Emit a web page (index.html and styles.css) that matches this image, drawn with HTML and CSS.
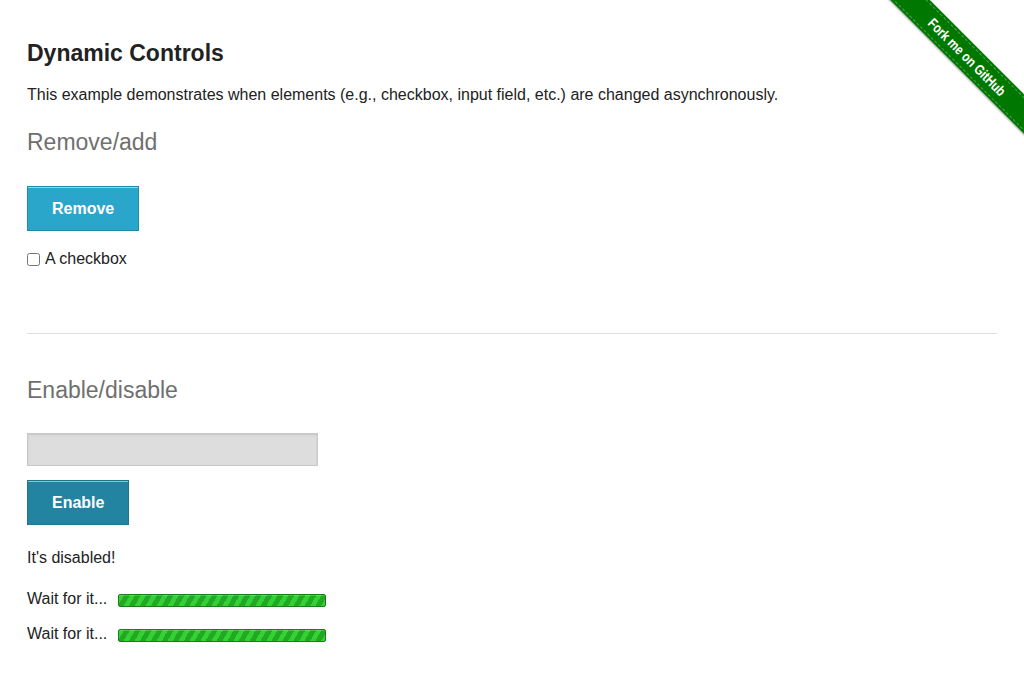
FILE: index.html
```html
<!DOCTYPE html>
<html>
<head>
<meta charset="utf-8">
<title>The Internet</title>
<link rel="stylesheet" href="styles.css">
</head>
<body>
<div class="ribbon-wrap"><a class="ribbon" href="#"><span class="ribbon-text">Fork me on GitHub</span></a></div>
<div class="page">
  <h3 class="title">Dynamic Controls</h3>
  <p class="intro">This example demonstrates when elements (e.g., checkbox, input field, etc.) are changed asynchronously.</p>
  <h4 class="subhead sub-first">Remove/add</h4>
  <button class="button btn-remove" type="button">Remove</button>
  <label class="check-row"><input type="checkbox" class="check"> A checkbox</label>
  <hr class="rule">
  <h4 class="subhead sub-second">Enable/disable</h4>
  <input class="text-input" type="text" disabled>
  <button class="button btn-enable" type="button">Enable</button>
  <p class="message">It's disabled!</p>
  <div class="loading loading-first"><span class="wait">Wait for it...</span><div class="bar"></div></div>
  <div class="loading loading-second"><span class="wait">Wait for it...</span><div class="bar"></div></div>
</div>
</body>
</html>
```
FILE: styles.css
```css
html, body {
  margin: 0;
  padding: 0;
  background: #fff;
}
body {
  font-family: "Liberation Sans", Arial, sans-serif;
  color: #222;
  overflow: hidden;
}
.page {
  padding: 40px 27px 0 27px;
  display: flex;
  flex-direction: column;
  align-items: flex-start;
}
.title {
  margin: 0;
  font-size: 23px;
  line-height: 26px;
  font-weight: bold;
  color: #222;
}
.intro {
  margin: 19px 0 0 0;
  font-size: 16px;
  line-height: 20px;
}
.subhead {
  margin: 23px 0 0 0;
  font-size: 23px;
  line-height: 28px;
  font-weight: normal;
  color: #6f6f6f;
}
.sub-second {
  margin-top: 42px;
}
.button {
  font-family: "Liberation Sans", Arial, sans-serif;
  font-size: 16px;
  line-height: 18px;
  font-weight: bold;
  color: #fff;
  padding: 13px 24px 12px 24px;
  border: 1px solid #1e8bb0;
  background: #2ba6cb;
  box-shadow: inset 0 1px 0 rgba(255, 255, 255, 0.5);
  cursor: pointer;
}
.btn-remove {
  margin-top: 30px;
}
.btn-enable {
  margin-top: 14px;
  background: #2284a1;
  border-color: #1d7590;
}
.check-row {
  margin-top: 18px;
  font-size: 16px;
  line-height: 20px;
  display: flex;
  align-items: center;
  gap: 5px;
}
.check {
  margin: 0;
  width: 13px;
  height: 13px;
}
.rule {
  align-self: stretch;
  margin: 64px 0 0 0;
  border: 0;
  border-top: 1px solid #ddd;
  height: 0;
}
.text-input {
  margin-top: 29px;
  width: 291px;
  height: 33px;
  box-sizing: border-box;
  border: 1px solid #c8c8c8;
  background: #ddd;
  box-shadow: inset 0 1px 2px rgba(0, 0, 0, 0.1);
}
.message {
  margin: 23px 0 0 0;
  font-size: 16px;
  line-height: 20px;
}
.loading {
  display: flex;
  align-items: flex-start;
  gap: 11px;
  font-size: 16px;
  line-height: 20px;
}
.loading-first {
  margin-top: 21px;
}
.loading-second {
  margin-top: 15px;
}
.bar {
  width: 208px;
  height: 13px;
  box-sizing: border-box;
  margin-top: 5px;
  border: 1px solid #1a7d1a;
  border-radius: 2px;
  background: repeating-linear-gradient(120deg, #32d232 0 4.5px, #22a822 4.5px 9.5px);
  box-shadow: inset 0 1px 0 rgba(255, 255, 255, 0.2);
}
.ribbon-wrap {
  position: absolute;
  top: 0;
  right: 0;
  width: 150px;
  height: 150px;
  overflow: hidden;
}
.ribbon {
  position: absolute;
  left: -7px;
  top: 43px;
  width: 200px;
  height: 28px;
  box-sizing: border-box;
  transform: rotate(45deg);
  background: #007800;
  box-shadow: 0 1px 2px rgba(0, 0, 0, 0.35);
  color: #fff;
  text-align: center;
  text-decoration: none;
  display: flex;
  align-items: center;
  justify-content: center;
}
.ribbon::before {
  content: "";
  position: absolute;
  left: 0;
  right: 0;
  top: 2px;
  bottom: 2px;
  border-top: 1px dashed rgba(255, 255, 255, 0.3);
  border-bottom: 1px dashed rgba(255, 255, 255, 0.3);
}
.ribbon-text {
  font-family: "Liberation Sans", Arial, sans-serif;
  font-size: 14px;
  font-weight: bold;
  line-height: 16px;
  display: inline-block;
  transform: scaleX(0.82);
  white-space: nowrap;
}
```
